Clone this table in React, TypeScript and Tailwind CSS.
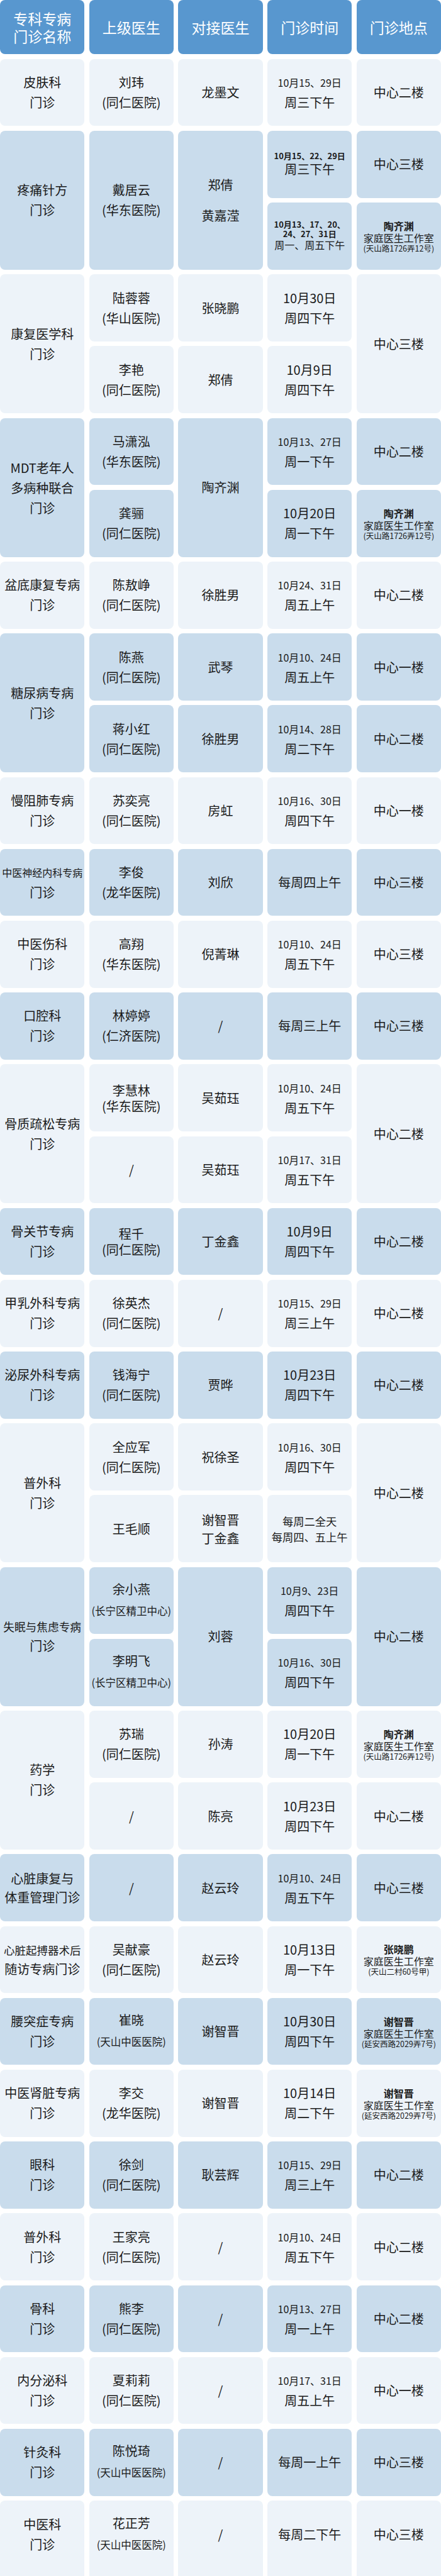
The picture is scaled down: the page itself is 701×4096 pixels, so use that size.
type Line = [string, string];
type Cell = { l: Line[]; span?: boolean };
type Group = { dark: boolean; cells: Cell[] };

// line styles
const N = "text-[20px] leading-[32px]";
const T = "text-[20px] leading-[25px]";
const D = "text-[16px] leading-[32px]";
const HS = "text-[16.5px] leading-[36px]";
const B13 = "text-[13px] leading-[14.6px] font-bold";
const L1 = "text-[16px] leading-[19px] font-semibold";
const L2 = "text-[16px] leading-[19px]";
const L3 = "text-[12.5px] leading-[13px]";

const c = (l: Line[], span = false): Cell => ({ l, span });
const one = (a: string) => c([[a, N]]);
const two = (a: string, b: string, span = false) => c([[a, N], [b, N]], span);
const small = (a: string, b: string) => c([[a, N], [b, HS]]);
const tight = (a: string, b: string) => c([[a, T], [b, T]]);
const date = (d: string, w: string) => c([[d, D], [w, N]]);
const loc = (who: string, addr: string) =>
  c([[who, L1], ["家庭医生工作室", L2], [addr, L3]]);
const slash = () => one("/");

const groups: Group[] = [
  {
    dark: false,
    cells: [two("皮肤科", "门诊"), two("刘玮", "(同仁医院)"), one("龙墨文"), date("10月15、29日", "周三下午"), one("中心二楼")],
  },
  {
    dark: true,
    cells: [
      two("疼痛针方", "门诊", true),
      two("戴居云", "(华东医院)", true),
      c([["郑倩", "text-[20px] leading-[49px]"], ["黄嘉滢", "text-[20px] leading-[49px]"]], true),
      c([["10月15、22、29日", "text-[13px] leading-[16px] font-bold"], ["周三下午", "text-[20px] leading-[26px]"]]),
      one("中心三楼"),
      c([["10月13、17、20、", B13], ["24、27、31日", B13], ["周一、周五下午", "text-[16px] leading-[21.4px]"]]),
      loc("陶齐渊", "(天山路1726弄12号)"),
    ],
  },
  {
    dark: false,
    cells: [
      two("康复医学科", "门诊", true),
      two("陆蓉蓉", "(华山医院)"),
      one("张晓鹏"),
      two("10月30日", "周四下午"),
      c([["中心三楼", N]], true),
      two("李艳", "(同仁医院)"),
      one("郑倩"),
      two("10月9日", "周四下午"),
    ],
  },
  {
    dark: true,
    cells: [
      c([["MDT老年人", "text-[20px] leading-[33px]"], ["多病种联合", N], ["门诊", N]], true),
      two("马潇泓", "(华东医院)"),
      c([["陶齐渊", N]], true),
      date("10月13、27日", "周一下午"),
      one("中心二楼"),
      two("龚骊", "(同仁医院)"),
      two("10月20日", "周一下午"),
      loc("陶齐渊", "(天山路1726弄12号)"),
    ],
  },
  {
    dark: false,
    cells: [two("盆底康复专病", "门诊"), two("陈敖峥", "(同仁医院)"), one("徐胜男"), date("10月24、31日", "周五上午"), one("中心二楼")],
  },
  {
    dark: true,
    cells: [
      two("糖尿病专病", "门诊", true),
      two("陈燕", "(同仁医院)"),
      one("武琴"),
      date("10月10、24日", "周五上午"),
      one("中心一楼"),
      two("蒋小红", "(同仁医院)"),
      one("徐胜男"),
      date("10月14、28日", "周二下午"),
      one("中心二楼"),
    ],
  },
  {
    dark: false,
    cells: [two("慢阻肺专病", "门诊"), two("苏奕亮", "(同仁医院)"), one("房虹"), date("10月16、30日", "周四下午"), one("中心一楼")],
  },
  {
    dark: true,
    cells: [
      c([["中医神经内科专病", "text-[16px] leading-[31px]"], ["门诊", N]]),
      two("李俊", "(龙华医院)"),
      one("刘欣"),
      one("每周四上午"),
      one("中心三楼"),
    ],
  },
  {
    dark: false,
    cells: [two("中医伤科", "门诊"), two("高翔", "(华东医院)"), one("倪菁琳"), date("10月10、24日", "周五下午"), one("中心三楼")],
  },
  {
    dark: true,
    cells: [two("口腔科", "门诊"), two("林婷婷", "(仁济医院)"), slash(), one("每周三上午"), one("中心三楼")],
  },
  {
    dark: false,
    cells: [
      two("骨质疏松专病", "门诊", true),
      tight("李慧林", "(华东医院)"),
      one("吴茹珏"),
      date("10月10、24日", "周五下午"),
      c([["中心二楼", N]], true),
      slash(),
      one("吴茹珏"),
      date("10月17、31日", "周五下午"),
    ],
  },
  {
    dark: true,
    cells: [two("骨关节专病", "门诊"), tight("程千", "(同仁医院)"), one("丁金鑫"), two("10月9日", "周四下午"), one("中心二楼")],
  },
  {
    dark: false,
    cells: [two("甲乳外科专病", "门诊"), two("徐英杰", "(同仁医院)"), slash(), date("10月15、29日", "周三上午"), one("中心二楼")],
  },
  {
    dark: true,
    cells: [two("泌尿外科专病", "门诊"), two("钱海宁", "(同仁医院)"), one("贾晔"), two("10月23日", "周四下午"), one("中心二楼")],
  },
  {
    dark: false,
    cells: [
      two("普外科", "门诊", true),
      two("全应军", "(同仁医院)"),
      one("祝徐圣"),
      date("10月16、30日", "周四下午"),
      c([["中心二楼", N]], true),
      one("王毛顺"),
      c([["谢智晋", "text-[20px] leading-[29px]"], ["丁金鑫", "text-[20px] leading-[29px]"]]),
      c([["每周二全天", "text-[17.3px] leading-[25px]"], ["每周四、五上午", "text-[17.3px] leading-[25px]"]]),
    ],
  },
  {
    dark: true,
    cells: [
      c([["失眠与焦虑专病", "text-[17.7px] leading-[30px]"], ["门诊", N]], true),
      small("余小燕", "(长宁区精卫中心)"),
      c([["刘蓉", N]], true),
      date("10月9、23日", "周四下午"),
      c([["中心二楼", N]], true),
      small("李明飞", "(长宁区精卫中心)"),
      date("10月16、30日", "周四下午"),
    ],
  },
  {
    dark: false,
    cells: [
      two("药学", "门诊", true),
      two("苏瑞", "(同仁医院)"),
      one("孙涛"),
      two("10月20日", "周一下午"),
      loc("陶齐渊", "(天山路1726弄12号)"),
      slash(),
      one("陈亮"),
      two("10月23日", "周四下午"),
      one("中心二楼"),
    ],
  },
  {
    dark: true,
    cells: [
      c([["心脏康复与", "text-[20px] leading-[30px]"], ["体重管理门诊", "text-[20px] leading-[30px]"]]),
      slash(),
      one("赵云玲"),
      date("10月10、24日", "周五下午"),
      one("中心三楼"),
    ],
  },
  {
    dark: false,
    cells: [
      c([["心脏起搏器术后", "text-[17.5px] leading-[30px]"], ["随访专病门诊", "text-[20px] leading-[30px]"]]),
      two("吴献豪", "(同仁医院)"),
      one("赵云玲"),
      two("10月13日", "周一下午"),
      loc("张晓鹏", "(天山二村60号甲)"),
    ],
  },
  {
    dark: true,
    cells: [two("腰突症专病", "门诊"), small("崔晓", "(天山中医医院)"), one("谢智晋"), two("10月30日", "周四下午"), loc("谢智晋", "(延安西路2029弄7号)")],
  },
  {
    dark: false,
    cells: [two("中医肾脏专病", "门诊"), two("李交", "(龙华医院)"), one("谢智晋"), two("10月14日", "周二下午"), loc("谢智晋", "(延安西路2029弄7号)")],
  },
  {
    dark: true,
    cells: [two("眼科", "门诊"), two("徐剑", "(同仁医院)"), one("耿芸辉"), date("10月15、29日", "周三上午"), one("中心二楼")],
  },
  {
    dark: false,
    cells: [two("普外科", "门诊"), two("王家亮", "(同仁医院)"), slash(), date("10月10、24日", "周五下午"), one("中心二楼")],
  },
  {
    dark: true,
    cells: [two("骨科", "门诊"), two("熊李", "(同仁医院)"), slash(), date("10月13、27日", "周一上午"), one("中心二楼")],
  },
  {
    dark: false,
    cells: [two("内分泌科", "门诊"), two("夏莉莉", "(同仁医院)"), slash(), date("10月17、31日", "周五上午"), one("中心一楼")],
  },
  {
    dark: true,
    cells: [two("针灸科", "门诊"), small("陈悦琦", "(天山中医医院)"), slash(), one("每周一上午"), one("中心三楼")],
  },
  {
    dark: false,
    cells: [two("中医科", "门诊"), small("花正芳", "(天山中医医院)"), slash(), one("每周二下午"), one("中心三楼")],
  },
];

const headers: string[][] = [["专科专病", "门诊名称"], ["上级医生"], ["对接医生"], ["门诊时间"], ["门诊地点"]];

function TableCell({ cell, dark, last }: { cell: Cell; dark: boolean; last: boolean }) {
  return (
    <div
      className={
        "flex flex-col items-center justify-center text-center rounded-[8px] " +
        (dark ? "bg-[#c9dcec] " : "bg-[#edf3f9] ") +
        (cell.span ? "row-span-2 " : "") +
        (last ? "self-start h-[130px] pb-[23px]" : "")
      }
    >
      {cell.l.map(([text, cls], i) => (
        <div key={i} className={cls + " whitespace-nowrap"}>
          {text}
        </div>
      ))}
    </div>
  );
}

export default function App() {
  return (
    <div className="w-[701px] h-[4096px] overflow-hidden bg-white text-[#1a1a1a] font-['Noto_Sans_CJK_SC','Noto_Sans',sans-serif]">
      <div className="grid grid-cols-5 gap-x-[7.4px] h-[86px]">
        {headers.map((h, i) => (
          <div
            key={i}
            className="flex flex-col items-center justify-center rounded-[8px] bg-[#5897cf] text-white text-[23px] leading-[28px]"
          >
            {h.map((t) => (
              <div key={t}>{t}</div>
            ))}
          </div>
        ))}
      </div>
      <div className="mt-[7.7px] grid grid-cols-5 gap-x-[7.4px] gap-y-[7.5px] auto-rows-[106.7px]">
        {groups.map((g, gi) =>
          g.cells.map((cell, ci) => (
            <TableCell key={gi + "-" + ci} cell={cell} dark={g.dark} last={gi === groups.length - 1} />
          ))
        )}
      </div>
    </div>
  );
}
